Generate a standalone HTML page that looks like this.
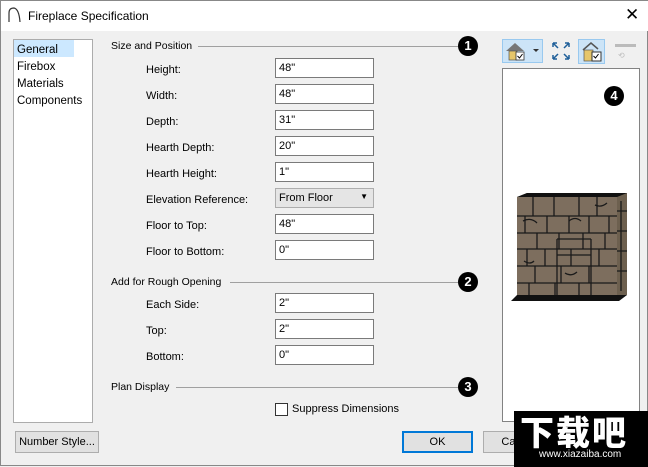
<!DOCTYPE html><html><head><style>
*{margin:0;padding:0;box-sizing:border-box}
body{width:648px;height:466px;background:#f0f0f0;font-family:"Liberation Sans",Arial,sans-serif;font-size:11px;color:#000;position:relative;overflow:hidden;border:1px solid #888}
.a{position:absolute}
.lbl{position:absolute;left:145px}
.in{position:absolute;left:274px;width:99px;height:20px;background:#fff;border:1px solid #7a7a7a;padding:3px 3px;font-size:11px}
.hd{position:absolute;left:110px;font-size:10.5px}
.ln{position:absolute;height:1px;background:#a0a0a0}
.bd{position:absolute;width:20px;height:20px;border-radius:50%;background:#000;color:#fff;font-weight:bold;font-size:13px;text-align:center;line-height:20px}
.btn{position:absolute;height:22px;border:1px solid #adadad;background:#e1e1e1;text-align:center;line-height:20px}
</style></head><body>
<div class="a" style="left:0;top:0;width:648px;height:30px;background:#fff"></div>
<svg class="a" style="left:7px;top:6px" width="14" height="16"><path d="M1 15 V6 Q1 1 6 1 Q11 2 12 15" fill="none" stroke="#333" stroke-width="1.2"/></svg>
<div class="a" style="left:27px;top:8px;font-size:12px">Fireplace Specification</div>
<div class="a" style="left:624px;top:4px;font-size:17px;font-weight:300">✕</div>
<div class="a" style="left:12px;top:38px;width:80px;height:384px;background:#fff;border:1px solid #acacac"></div>
<div class="a" style="left:13px;top:39px;width:60px;height:17px;background:#cce8ff"></div>
<div class="a" style="left:16px;top:41px;line-height:17px;font-size:11.5px">General<br>Firebox<br>Materials<br>Components</div>
<div class="hd" style="top:39px">Size and Position</div><div class="ln" style="left:197px;width:260px;top:45px"></div><div class="bd" style="left:457px;top:35px">1</div>
<div class="lbl" style="top:63px">Height:</div><div class="in" style="top:57px">48"</div>
<div class="lbl" style="top:89px">Width:</div><div class="in" style="top:83px">48"</div>
<div class="lbl" style="top:115px">Depth:</div><div class="in" style="top:109px">31"</div>
<div class="lbl" style="top:141px">Hearth Depth:</div><div class="in" style="top:135px">20"</div>
<div class="lbl" style="top:167px">Hearth Height:</div><div class="in" style="top:161px">1"</div>
<div class="lbl" style="top:193px">Elevation Reference:</div><div class="in" style="top:187px;background:#e5e5e5;border-color:#adadad">From Floor<span style="position:absolute;right:5px;top:3px;font-size:8px">▼</span></div>
<div class="lbl" style="top:219px">Floor to Top:</div><div class="in" style="top:213px">48"</div>
<div class="lbl" style="top:245px">Floor to Bottom:</div><div class="in" style="top:239px">0"</div>
<div class="hd" style="top:275px">Add for Rough Opening</div><div class="ln" style="left:229px;width:228px;top:281px"></div><div class="bd" style="left:457px;top:271px">2</div>
<div class="lbl" style="top:298px">Each Side:</div><div class="in" style="top:292px">2"</div>
<div class="lbl" style="top:324px">Top:</div><div class="in" style="top:318px">2"</div>
<div class="lbl" style="top:350px">Bottom:</div><div class="in" style="top:344px">0"</div>
<div class="hd" style="top:380px">Plan Display</div><div class="ln" style="left:175px;width:282px;top:386px"></div><div class="bd" style="left:457px;top:376px">3</div>
<div class="a" style="left:274px;top:402px;width:13px;height:13px;background:#fff;border:1px solid #333"></div>
<div class="a" style="left:291px;top:402px">Suppress Dimensions</div>
<div class="a" style="left:501px;top:38px;width:41px;height:24px;background:#cce4f7;border:1px solid #99c9ef"></div>
<svg class="a" style="left:503px;top:40px" width="40" height="20"><path d="M2 10 L11 2 L20 10Z" fill="#777"/><rect x="5" y="10" width="8" height="9" fill="#e6c66a" stroke="#555" stroke-width=".7"/><rect x="12" y="11" width="8" height="8" fill="#fff" stroke="#333" stroke-width=".8"/><path d="M13.5 15 l2 2 l3 -4" stroke="#000" fill="none"/><path d="M29 8 h6 l-3 3z" fill="#333"/></svg>
<svg class="a" style="left:550px;top:40px" width="20" height="20"><g stroke="#1f5f99" stroke-width="1.5" fill="none"><path d="M2 2l5 5M2 2h4M2 2v4M18 2l-5 5M18 2h-4M18 2v4M2 18l5-5M2 18h4M2 18v-4M18 18l-5-5M18 18h-4M18 18v-4"/></g></svg>
<div class="a" style="left:577px;top:38px;width:27px;height:25px;background:#cce4f7;border:1px solid #99c9ef"></div>
<svg class="a" style="left:580px;top:40px" width="22" height="22"><path d="M2 9 L10 2 L17 8" fill="none" stroke="#555" stroke-width="1.5"/><rect x="3" y="9" width="9" height="11" fill="#e6c66a" stroke="#555" stroke-width=".7"/><rect x="11" y="11" width="9" height="9" fill="#fff" stroke="#333"/><path d="M12.5 15 l2 2 l3 -4" stroke="#000" fill="none"/></svg>
<div class="a" style="left:614px;top:43px;width:21px;height:3px;background:#bbb"></div>
<div class="a" style="left:617px;top:50px;font-size:8px;color:#bbb">⟲</div>
<div class="a" style="left:501px;top:67px;width:138px;height:354px;background:#fff;border:1px solid #828282"></div>
<div class="bd" style="left:603px;top:85px">4</div>
<svg class="a" style="left:508px;top:190px" width="122" height="110">
<path d="M8 6 L18 2 L118 2 L118 104 L8 104 Z" fill="#7d6e5e"/>
<path d="M8 6 L18 2 L118 2 L116 6Z" fill="#111"/>
<path d="M108 6 L118 2 V104 L108 106Z" fill="#6d604f"/>
<path d="M2 110 L8 104 L118 104 L110 110Z" fill="#111"/>
<g stroke="#1a1a1a" stroke-width="1.3" fill="none">
<path d="M8 25 H108 M8 42 H108 M8 58 H108 M8 75 H108 M8 92 H108"/>
<path d="M24 6 V25 M45 6 V25 M70 6 V25 M88 6 V25 M16 25 V42 M38 25 V42 M60 25 V42 M80 25 V42 M100 25 V42 M28 42 V58 M50 42 V58 M74 42 V58 M96 42 V58 M18 58 V75 M36 58 V75 M62 58 V75 M90 58 V75 M26 75 V92 M52 75 V92 M80 75 V92 M20 92 V104 M46 92 V104 M70 92 V104"/>
<path d="M48 48 V104 M82 48 V104 M48 48 H82 M48 64 H82"/>
<path d="M112 10 V100 M108 20 h10 M108 40 h10 M108 60 h10 M108 80 h10"/>
<path d="M14 30 q8 -4 14 2 M60 30 q6 -5 12 0 M56 82 q6 4 12 -1 M15 70 q6 4 10 0 M86 14 q6 3 12 -2"/>
</g></svg>
<div class="btn" style="left:14px;top:430px;width:84px">Number Style...</div>
<div class="btn" style="left:401px;top:430px;width:71px;border:2px solid #0078d7;line-height:18px">OK</div>
<div class="btn" style="left:482px;top:430px;width:71px">Cancel</div>
<div class="a" style="left:513px;top:410px;width:135px;height:56px;background:#000;color:#fff">
<div style="font-family:'Noto Sans CJK SC',sans-serif;font-weight:900;font-size:34px;line-height:40px;letter-spacing:2px;padding-left:6px">下载吧</div>
<div style="font-size:10px;padding-left:25px;margin-top:-2px">www.xiazaiba.com</div></div>
</body></html>
